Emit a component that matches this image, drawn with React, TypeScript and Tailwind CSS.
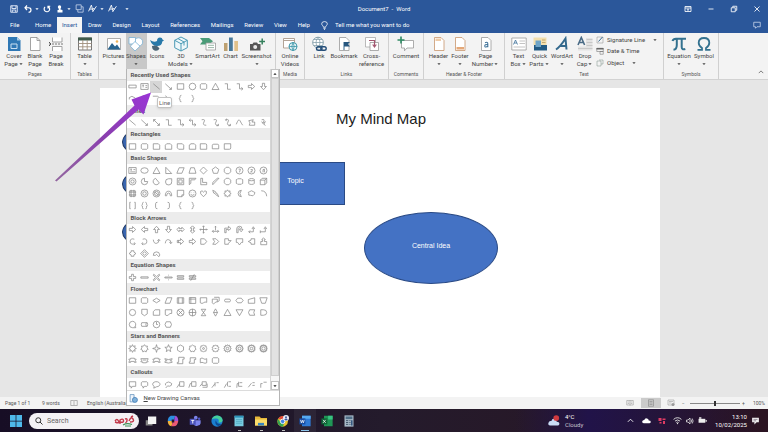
import type { ReactNode } from "react";

/* ---------- geometry helpers for the shape gallery (12 x 12 cells) ---------- */

const circle = (r: number, cx = 6, cy = 6) =>
  `M${cx - r} ${cy}a${r} ${r} 0 1 0 ${2 * r} 0a${r} ${r} 0 1 0 ${-2 * r} 0`;

const polygon = (n: number, r = 3.8, start = -90) => {
  const pts = Array.from({ length: n }, (_, i) => {
    const a = ((start + (i * 360) / n) * Math.PI) / 180;
    return `${(6 + r * Math.cos(a)).toFixed(2)} ${(6 + r * Math.sin(a)).toFixed(2)}`;
  });
  return `M${pts.join("L")}Z`;
};

const star = (n: number, outer = 4, inner = 2) => {
  const pts = Array.from({ length: n * 2 }, (_, i) => {
    const r = i % 2 ? inner : outer;
    const a = ((-90 + (i * 180) / n) * Math.PI) / 180;
    return `${(6 + r * Math.cos(a)).toFixed(2)} ${(6 + r * Math.sin(a)).toFixed(2)}`;
  });
  return `M${pts.join("L")}Z`;
};

const rect = "M2.5 3h7v6h-7Z";
const roundRect = "M3.5 3h5l1 1v4l-1 1h-5l-1-1V4Z";
const oval = "M2 6a4 3 0 1 0 8 0a4 3 0 1 0-8 0";
const triangle = "M6 2.5L9.8 9.3H2.2Z";
const right = "M2.5 4.8H6V2.8L9.5 6L6 9.2V7.2H2.5Z";
const left = "M9.5 4.8H6V2.8L2.5 6L6 9.2V7.2H9.5Z";
const up = "M4.8 9.5V6H2.8L6 2.5L9.2 6H7.2V9.5Z";
const down = "M4.8 2.5V6H2.8L6 9.5L9.2 6H7.2V2.5Z";
const braceL = "M7 2.5Q5.5 2.5 5.5 4T4.5 6Q5.5 6 5.5 8T7 9.5";
const braceR = "M5 2.5Q6.5 2.5 6.5 4T7.5 6Q6.5 6 6.5 8T5 9.5";
const line = "M2.5 3L9.5 9";
const lineArrow = "M2.5 3L9 9M9.2 6.8V9.2H6.8";
const lineDouble = "M3 3L9 9M9.2 6.8V9.2H6.8M2.8 5.2V2.8H5.2";
const elbow = "M3 3H6V9H9.5";
const elbowArrow = "M3 3H6V8.5H9.5M8 7L9.8 8.5L8 10";
const elbowDouble = "M2.5 3.5H6V8.5H9.5M8 7L9.8 8.5L8 10M4 2L2.4 3.5L4 5";
const curve = "M4 3Q8.5 2 6.5 5.5T9 9";
const cross = "M5 2.5H7V5H9.5V7H7V9.5H5V7H2.5V5H5Z";
const snip = "M2.5 3H8L9.5 4.5V9H2.5Z";
const arc = "M2.5 8.5Q2.5 3.5 6 3.5T9.5 8.5H8Q8 5.5 6 5.5T4 8.5Z";
const scroll = "M3.5 3H9.5V5H8V9H2.5V7.5H3.5Z";
const ribbon = "M2 4.5H4V3.5H8V4.5H10L9.2 6.2L10 8H8V7H4V8H2L2.8 6.2Z";
const chevron = "M3 3H6.5L9.5 6L6.5 9H3L5 6Z";
const callout = "M2.5 3H9.5V8H6L4.5 10V8H2.5Z";
const lineCallout = "M5 3H9.8V8H5ZM5 5L2 9.5";

type Section = { title: string; shapes: string[] };

const sections: Section[] = [
  {
    title: "Recently Used Shapes",
    shapes: [
      "M2 4.5H10V7.5H2Z", "M2 2.8H10V9.2H2ZM3.5 4.5H5.5M4.5 4.5V7M7 5H9M7 7H9", line, lineArrow, rect, circle(3.6),
      roundRect, triangle, elbow, elbowArrow, right, down,
      "M2.5 5Q5 2 9 5.5M2.5 5V7", curve, "M2 3.5H7L9 5", line, braceL, braceR,
    ],
  },
  {
    title: "Lines",
    shapes: [
      line, lineArrow, lineDouble, elbow, elbowArrow, elbowDouble, curve, `${curve}M7 9.5H9.2V7.5`,
      `${curve}M7 9.5H9.2V7.5M5.5 2L3.8 3L5 4.5`, "M2.5 8Q5 1 6.5 4T9.5 9", "M3 4L8 3L6.5 5.5H9.5V9H3.5Q5.5 6.5 3 4Z",
      "M4 3Q8 2 6 5T8 5Q5 8 8 9.5M4 5L6 8",
    ],
  },
  {
    title: "Rectangles",
    shapes: [
      rect, roundRect, snip, "M4 3H8L9.5 4.5V9H2.5V4.5Z", "M2.5 3H8L9.5 4.5V9H4L2.5 7.5Z", "M4 3H8L9.5 4.5V9H2.5V4.5Q3.5 4.5 4 3Z",
      "M2.5 3H8Q9.5 3 9.5 4.5V9H2.5Z", "M4 3.5H8Q9.5 3.5 9.5 5V8.5H2.5V5Q2.5 3.5 4 3.5Z", "M2.5 3H9.5V7.5Q9.5 9 8 9H2.5Z",
    ],
  },
  {
    title: "Basic Shapes",
    shapes: [
      "M2 2.8H10V9.2H2ZM3.5 4.5H5.5M4.5 4.5V6.5M7 5H9M3.5 7.5H9", oval, triangle, "M3 2.5V9.3H9.5Z", "M4.5 3H10L7.5 9H2Z",
      "M4 3H8L9.8 9H2.2Z", polygon(4), polygon(5), polygon(8, 3.8, 22.5), `${circle(3.8)}M5 4.5H7L6 8`,
      `${circle(3.8)}M5 5H7V6L5 7.5H7`, `${circle(3.8)}M5.5 5L7 4.5V8M5.5 5V8`,
      `${circle(3.8)}${circle(1.8)}`, "M6 2.5A3.5 3.5 0 1 0 9.5 6H6Z", "M5 2.6A3.5 3.5 0 1 0 9 7.5Z", "M6 3H9.5V6A3.4 3.4 0 1 1 6 3Z",
      "M2.5 2.5H9.5V9.5H2.5ZM4.2 4.2H7.8V7.8H4.2Z", "M2.5 9.5V2.5H9.8L8.5 4.2H4.2V8Z", "M3 2.5H5V7H9.5V9.5H3Z", "M3 9.5V7L8 2.5H9.8Z",
      polygon(8, 3.8, 22.5), "M4 3H8Q8.5 4 9.5 4V8Q8.5 8 8 9H4Q3.5 8 2.5 8V4Q3.5 4 4 3Z",
      "M3 4a3 1.2 0 1 0 6 0a3 1.2 0 1 0-6 0V8a3 1.2 0 0 0 6 0V4", "M2.5 4.5L4.5 2.5H9.5V7.5L7.5 9.5H2.5ZM2.5 4.5H7.5V9.5M7.5 4.5L9.5 2.5",
      "M3 3H9V9H3ZM2 4.5H10M2 7.5H10M4.5 2V10M7.5 2V10", `${circle(3.8)}${circle(1.9)}`, `${circle(3.8)}${circle(2.2)}M3.5 4L8.5 8`, arc,
      "M2.5 2.5H9.5V7.5L7.5 9.5H2.5ZM7.5 9.5V7.5H9.5", `${circle(3.8)}M4.5 5V5.5M7.5 5V5.5M4 7Q6 9 8 7`,
      "M6 9.5Q1.5 6 2.8 3.8Q4.5 2 6 4.5Q7.5 2 9.2 3.8Q10.5 6 6 9.5Z", "M3 2.5L6 4L6.5 5.5L8 6.2L9.5 9.5L6 7L5.5 6L4 5.5Z",
      star(8, 4, 2.6), "M8 2.5A3.5 3.5 0 1 0 8 9.5Q4.8 6 8 2.5Z", "M3 6Q1.5 4.5 4 4Q6 2 8 4Q11 4.5 9 7Q8 9.5 5 8Q2 8.5 3 6Z", "M3.5 3Q9 3 9.5 9",
      "M4 2.5H3V9.5H4M8 2.5H9V9.5H8", "M5 2.5Q3.8 2.5 3.8 4T3 6Q3.8 6 3.8 8T5 9.5M7 2.5Q8.2 2.5 8.2 4T9 6Q8.2 6 8.2 8T7 9.5",
      "M7 2.5Q5 2.5 5 4V8Q5 9.5 7 9.5", "M5 2.5Q7 2.5 7 4V8Q7 9.5 5 9.5", braceL, braceR,
    ],
  },
  {
    title: "Block Arrows",
    shapes: [
      right, left, up, down, "M2 6L4.5 3.5V5H7.5V3.5L10 6L7.5 8.5V7H4.5V8.5Z", "M6 2L8.5 4.5H7V7.5H8.5L6 10L3.5 7.5H5V4.5H3.5Z",
      "M6 2V10M2 6H10M5 3L6 2L7 3M5 9L6 10L7 9M3 5L2 6L3 7M9 5L10 6L9 7", "M6 2.5V7M2.5 8H9.5M4 6.5L2.5 8L4 9.5M8 6.5L9.5 8L8 9.5M5 3.5L6 2.5L7 3.5",
      "M3 9.5V4.5H7V2.5L9.8 5L7 7V6H4.5V9.5Z", "M3 9.5V5Q3 2.5 6 2.5T8.5 5V6H9.8L7.8 8.5L5.8 6H7Q7 4 6 4T4.5 5V9.5Z",
      "M3 8.5H8V4.5M6.5 5.5L8 3L9.5 5.5M4.5 7L3 8.5L4.5 10", "M2.5 8.5H8V4.5M6.5 5.5L8 3L9.5 5.5M2.5 7V10",
      "M8 3.5Q3.5 2 3.5 6T8.5 8.5M8 7L9 8.5L7.5 9.8", "M4 3.5Q8.5 2 8.5 6T3.5 8.5M4 7L3 8.5L4.5 9.8", "M2.5 4Q3 8.5 6 8T8.5 4.5M7 5.5L8.5 3.5L10 5.5",
      "M2.5 8Q3 3.5 6 4T8.5 7.5M7 6.5L8.5 8.5L10 6.5", `${right}M3.8 4.8V7.2`, right, "M3 3H7L9.5 6L7 9H3Z", chevron,
      "M3 3H7V5H10L7 8V9H3Z", "M2.5 3H9.5V7H8L6 9.8L4 7H2.5Z", "M9.5 3H5.5V4.5L2.5 6L5.5 7.5V9H9.5Z", "M3 9.5V6H5V4H4L6 2L8 4H7V6H9.5V9.5Z",
      "M4.5 3H7.5V4.5L9.8 6L7.5 7.5V9H4.5V7.5L2.2 6L4.5 4.5Z", `${polygon(4, 4.2)}${polygon(4, 2)}`, "M2.5 8A3.5 3.5 0 0 1 9.5 7.5M5 8Q6 6 7 8L8.5 9.5L9.8 7.5M2.5 8H5",
    ],
  },
  {
    title: "Equation Shapes",
    shapes: [
      cross, "M2 5.3H10V6.7H2Z", "M3 2.5L6 5L9 2.5L9.5 3.5L7.2 6L9.5 8.5L9 9.5L6 7L3 9.5L2.5 8.5L4.8 6L2.5 3.5Z",
      "M2 5.5H10V6.5H2ZM6 3V3.8M6 8.2V9", "M2.5 4H9.5V5.4H2.5ZM2.5 6.6H9.5V8H2.5Z", "M2.5 4H9.5V5.4H2.5ZM2.5 6.6H9.5V8H2.5ZM8 2.5L4 9.5",
    ],
  },
  {
    title: "Flowchart",
    shapes: [
      rect, roundRect, "M6 3.5L10 6L6 8.5L2 6Z", "M4.5 3H9.8L7.5 9H2.2Z", "M2.5 3H9.5V9H2.5ZM4 3V9M8 3V9", "M2.5 2.8H9.5V9.2H2.5ZM2.5 4.5H9.5M4.2 2.8V9.2",
      "M2.5 3H9.5V8Q7.5 7 6 8.5T2.5 8.5Z", "M4.5 2.5H10V6.5L8 7.5Q6 7 5 9T2.5 8.5V4.5H8V7.5", "M3.5 4.5H8.5Q10 6 8.5 7.5H3.5Q2 6 3.5 4.5Z",
      "M2 6L4 3.5H8L10 6L8 8.5H4Z", "M2.5 5L9.5 3V9H2.5Z", "M2 3H10L8 9H4Z",
      circle(3.4), "M3 2.5H9V7.5L6 9.5L3 7.5Z", "M4.5 3H9.5V9H2.5V5Z", "M2.5 3H9.5V7Q7.5 6.5 6 8.5T2.5 8.5Z", `${circle(3.8)}M3.5 3.5L8.5 8.5M8.5 3.5L3.5 8.5`,
      `${circle(3.8)}M6 2.2V9.8M2.2 6H9.8`, "M3.5 2.5H8.5L3.5 9.5H8.5Z", "M6 2L8.2 6L6 10L3.8 6ZM3.8 6H8.2", triangle, "M2.2 3H9.8L6 9.5Z",
      "M4 3H9.5Q7.5 6 9.5 9H4Q1.5 6 4 3Z", "M3 3H6Q9.5 3 9.5 6T6 9H3Z",
      "M6 2.5A3.5 3.5 0 1 0 6 9.5H9.5V8.5H8.5A3.5 3.5 0 0 0 6 2.5", "M3 4H9Q10 6 9 8H3Q2 6 3 4ZM8 4Q7 6 8 8", `${circle(3.6)}M6 3V6H7.5`, "M3.5 3H8Q10.5 6 8 9H3.5L2.2 6Z",
    ],
  },
  {
    title: "Stars and Banners",
    shapes: [
      star(8, 4.2, 2.4), star(7, 4.2, 2.8), star(4, 4.2, 1.3), star(5, 4.2, 1.8), polygon(6), star(7, 4, 3), `${star(8, 4, 3)}${circle(1)}`,
      `${star(10, 4, 3)}M5 6H7`, `${star(12, 4.2, 3)}${circle(1.4)}`, `${star(16, 4.2, 3)}${circle(1.6)}`, `${star(18, 4.2, 3)}${circle(1.4)}`, `${star(20, 4.2, 3)}${circle(1.8)}`,
      ribbon, "M2 4H10L9.2 6L10 7.5H8V8.5H4V7.5H2L2.8 6ZM4 5.5H8", ribbon, "M2 4Q6 6 10 4L9.2 6L10 8Q6 9.5 2 8L2.8 6ZM4 5V7M8 5V7",
      "M4 2.5H10V4.5H8.5V9.5H2.5V8H4Z", scroll, "M2.5 4Q4.5 2.5 6 4T9.5 4V8.5Q7.5 9.5 6 8.5T2.5 8.5Z", roundRect,
    ],
  },
  {
    title: "Callouts",
    shapes: [
      callout, "M3.5 3H8.5L9.5 4V7L8.5 8H6L4.5 10V8H3.5L2.5 7V4Z", "M3.5 8A4 2.8 0 1 1 6 8.5L3 10Z", "M3 7Q1.5 5 4 4Q6 2.5 8 4Q10.5 4.5 9 7Q7 8.5 5 7.5L3 9.8",
      lineCallout, "M5 3H9.8V8H5ZM5 5H3.5L2 9.5", "M4.5 3H9V7H4.5ZM5 9H10V5M4.5 5L2 8", "M5.5 3.5V8M5.5 5L2 9.5M7 4H9.5", "M6 3V8M7 3H9.8M5 5L2.5 9.5M7 8H9.8",
      "M5 3V8H9M5 5H3.5L3 9.5M6 4H9", "M2.5 9L6 4.5M7 4H9.5M7 7H9.5", "M3 9.5V5H5M6 3.5H9.5",
    ],
  },
];

/* ---------- small building blocks ---------- */

const Svg = ({ children, className = "size-4", box = 16 }: { children: ReactNode; className?: string; box?: number }) => (
  <svg viewBox={`0 0 ${box} ${box}`} className={`shrink-0 ${className}`} fill="none" aria-hidden="true">
    {children}
  </svg>
);

const Caret = ({ className = "" }: { className?: string }) => (
  <svg viewBox="0 0 6 4" className={`inline-block h-1 w-1.5 shrink-0 ${className}`} aria-hidden="true">
    <path d="M1.4 1.2h3.2L3 2.9Z" fill="currentColor" />
  </svg>
);

function Tool({ icon, top, bottom, caret, width }: { icon: ReactNode; top: string; bottom?: string; caret?: boolean; width: string }) {
  return (
    <button type="button" className={`flex h-9 flex-col items-center whitespace-nowrap pt-[3px] text-[6px] leading-[8px] text-[#444] ${width}`}>
      {icon}
      <span>{top}</span>
      <span className="flex h-2 items-center">
        {bottom}
        {caret && <Caret />}
      </span>
    </button>
  );
}

function Group({ name, label, width, children }: { name: string; label?: string; width: string; children: ReactNode }) {
  return (
    <section aria-label={name} className={`flex shrink-0 flex-col border-r border-[#d0d0d0] ${width}`}>
      <div className="flex justify-center">{children}</div>
      {label && <span className="mt-px text-center text-[5px] leading-[8px] text-[#555]">{label}</span>}
    </section>
  );
}

/* ---------- ribbon icons ---------- */

const sheet = "M3.5 1.5H10L13 4.5V14.5H3.5Z";

const icons = {
  cover: <Svg><path d="M2 1H11L14.5 4.5V15H2Z" fill="#2f78b5" /><path d="M11 1V4.5H14.5" fill="#a9cbe6" /><path d="M5 8H11V12.5H5Z" stroke="#c9e0f2" /></Svg>,
  blank: <Svg><path d={sheet} fill="#fff" stroke="#8d8d8d" strokeWidth=".8" /><path d="M10 1.5V4.5H13" stroke="#8d8d8d" strokeWidth=".8" /></Svg>,
  pageBreak: <Svg><path d="M4.5 1.5V6H14V1.5M4.5 15V10.5H14V15" fill="#fff" stroke="#999" strokeWidth=".9" /><path d="M1 8H15" stroke="#777" strokeDasharray="2 1" /><path d="M1 6L3 8L1 10" stroke="#555" /></Svg>,
  table: <Svg><path d="M1.5 2H14.5V14H1.5Z" fill="#fff" stroke="#777" /><path d="M1 1.5H15V4.5H1Z" fill="#3f5a4a" /><path d="M1.5 7.5H14.5M1.5 10.8H14.5M5.8 4V14M10.2 4V14" stroke="#a08f7c" strokeWidth=".9" /></Svg>,
  pictures: <Svg><path d="M1.5 2.5H14.5V13.5H1.5Z" fill="#fff" stroke="#999" strokeWidth=".8" /><path d="M1.5 13.5L6 7L9 10.5L11 8.5L14.5 13.5Z" fill="#29648f" /><circle cx="11" cy="5.5" r="1.3" fill="#f0b35b" /></Svg>,
  shapes: <Svg className="h-4 w-[18px]"><circle cx="10.5" cy="6" r="4.2" fill="#fff" stroke="#7ab1d4" strokeWidth=".8" /><path d="M1 1.5H7.5V8H1Z" fill="#fff" stroke="#7ab1d4" strokeWidth=".8" /><path d="M7 5.5L12 10.2L7 15L2.3 10.2Z" fill="#fff" stroke="#7ab1d4" strokeWidth=".8" /></Svg>,
  icons: <Svg><path d="M1 4Q5 7 8 5Q8 1.5 11 1.5Q13.3 1.5 13.5 3.5L15 4.5L13.3 5.5Q13 10 8 10Q3 10 1 4Z" fill="#2879a9" /><path d="M3 10Q8 8 10.5 12.5Q9 15.5 5.5 14.5Q3 13.5 3 10Z" fill="#4a6475" /></Svg>,
  models: <Svg><path d="M8 1L14.3 4.3V11.7L8 15L1.7 11.7V4.3Z" fill="#eef7fa" stroke="#4b9ab5" /><path d="M1.7 4.3L8 7.7L14.3 4.3M8 7.7V15M5 2.6L11 6V9.5" stroke="#4b9ab5" /></Svg>,
  smart: <Svg className="h-4 w-[18px]"><path d="M0 2H9L13 5.2L9 8.5H0L2.5 5.2Z" fill="#4b9c78" /><path d="M6 7H15.5V14H6Z" fill="#fff" stroke="#999" strokeWidth=".8" /><path d="M8 9.3H14M8 11.6H14" stroke="#9bb8a8" /></Svg>,
  chart: <Svg><path d="M1 7H4.5V15H1Z" fill="#bda070" /><path d="M6 1.5H9.8V15H6Z" fill="#49789a" /><path d="M11.3 5H15V15H11.3Z" fill="#e2c18a" /></Svg>,
  screenshot: <Svg className="h-4 w-[18px]"><path d="M1 8H3.5L4.5 6.5H8L9 8H11.5V14.5H1Z" fill="#555" /><circle cx="6.2" cy="11" r="2" fill="#e8e8e8" /><path d="M13.2 2.5V8.5M10.2 5.5H16" stroke="#35805c" strokeWidth="1.5" /></Svg>,
  video: <Svg><path d="M1.5 2.5H12.5V12H1.5Z" fill="#fff" stroke="#b3a396" /><path d="M1.5 4.5H12.5" stroke="#b3a396" /><circle cx="11" cy="10.5" r="4" fill="#e7f4f6" stroke="#3c96a8" /><path d="M7 10.5H15M11 6.5Q8.5 10.5 11 14.5Q13.5 10.5 11 6.5" stroke="#3c96a8" strokeWidth=".8" /></Svg>,
  link: <Svg><circle cx="7" cy="6.5" r="5.3" fill="#fff" stroke="#7896a4" strokeWidth=".9" /><path d="M1.7 6.5H12.3M7 1.2Q3 6.5 7 11.8Q11 6.5 7 1.2M2.8 3.5H11.2M2.8 9.5H11.2" stroke="#7896a4" strokeWidth=".7" /><rect x="5.5" y="10.7" width="5.5" height="3.6" rx="1.8" stroke="#224d78" strokeWidth="1.4" /><rect x="9.8" y="10.7" width="5.4" height="3.6" rx="1.8" stroke="#224d78" strokeWidth="1.4" /></Svg>,
  bookmark: <Svg><path d={sheet} fill="#fff" stroke="#999" strokeWidth=".8" /><path d="M8 6V14" stroke="#33658a" /><path d="M8 6H14L12 8L14 10.5H8Z" fill="#27577f" /></Svg>,
  cross: <Svg><path d="M1.5 1.5H11.5V11H1.5Z" fill="#fff" stroke="#aaa" strokeWidth=".8" /><path d="M6 6.5H14.5V14.5H6Z" fill="#fff" stroke="#999" strokeWidth=".8" /><path d="M5 4.5H10.5V10M8.7 8.5L10.5 11L12.3 8.5" stroke="#a35870" strokeWidth="1.2" /></Svg>,
  comment: <Svg className="h-4 w-[18px]"><path d="M3.5 4.5H15.5V12H9L6.5 14.8V12H3.5Z" fill="#fff" stroke="#999" strokeWidth=".8" /><path d="M3 .5V7.5M-.5 4H6.5" stroke="#2f8a63" strokeWidth="1.6" /></Svg>,
  header: <Svg><path d={sheet} fill="#fff" stroke="#c8966c" strokeWidth=".8" /><path d="M4.5 2.5H10V5H4.5Z" fill="#eecba8" /></Svg>,
  footer: <Svg><path d={sheet} fill="#fff" stroke="#c8966c" strokeWidth=".8" /><path d="M4.5 11H12V13.5H4.5Z" fill="#e5a878" /></Svg>,
  number: <Svg><path d={sheet} fill="#fff" stroke="#999" strokeWidth=".8" /><path d="M7 6.7Q10 5.5 9.8 8V11.2M9.8 8.5Q6.5 8.3 6.8 10.2Q7.5 12 9.8 10" stroke="#41749b" strokeWidth="1.1" /></Svg>,
  textBox: <Svg><path d="M.8 2H15.2V14H.8Z" fill="#fff" stroke="#999" strokeWidth=".8" /><path d="M2.5 8.5L4.5 4L6.5 8.5M3.2 7H5.8" stroke="#4e7da3" strokeWidth=".9" /><path d="M8.5 5H14M8.5 7.5H14M2.5 11H14" stroke="#b5b5b5" strokeWidth=".8" /></Svg>,
  quick: <Svg><path d="M1.5 1.5H14.5V9H1.5Z" fill="#f3dfae" /><path d="M2 9H15V14.5H2Z" fill="#225a83" /><path d="M3.5 4.5H9V11H3.5Z" fill="#6fa5c8" /><path d="M10 4H13.5M10 6.5H13.5" stroke="#b69b61" strokeWidth=".8" /></Svg>,
  wordArt: <Svg><path d="M2 13.5Q6 11 11.5 2.5L12.5 13.5M5.5 10H13" stroke="#34698d" strokeWidth="2" /></Svg>,
  dropCap: <Svg><path d="M9 2H15.5V14.5H1V10.5H9Z" fill="#e3e3e3" /><path d="M1 9L4.3 1.5L7.6 9M2.2 6.5H6.5" stroke="#4a6b86" strokeWidth="1.6" /><path d="M9.5 3.5H15.5M9.5 6.5H15.5M9.5 9.5H15.5M1 12.5H15.5" stroke="#c2c2c2" strokeWidth=".8" /></Svg>,
  pi: <Svg><path d="M1.5 5Q2.2 2.7 5 2.7H15M5.8 3V9Q5.8 13.5 2.5 13.8M10.7 3V11Q10.7 14.2 14.3 13" stroke="#33718f" strokeWidth="2" /></Svg>,
  omega: <Svg><path d="M1.5 13.8H6V12Q2.7 10 2.7 6.8Q2.7 2 8 2T13.3 6.8Q13.3 10 10 12V13.8H14.5" stroke="#33718f" strokeWidth="1.8" /></Svg>,
};

/* ---------- title bar and tabs ---------- */

const tabs = ["Home", "Insert", "Draw", "Design", "Layout", "References", "Mailings", "Review", "View", "Help"];

const QuickButton = ({ label, children, className }: { label: string; children: ReactNode; className: string }) => (
  <button type="button" aria-label={label} className={`flex items-center ${className}`}>
    {children}
  </button>
);

const Editor = () => (
  <Svg className="size-[9px]">
    <path d="M1 13L6 2L9 13M3 9H8M8 14L15 4M9 8L12 9" stroke="#fff" strokeWidth="1.6" />
  </Svg>
);

function TitleBar() {
  return (
    <header className="shrink-0 bg-[#2b579a] text-[6px] leading-[8px] text-white">
      <div className="grid h-[17px] grid-cols-[1fr_auto_1fr] items-center">
        <div className="flex items-center pl-[10px]">
          <QuickButton label="Save" className="w-[14px]">
            <Svg className="size-2"><path d="M1.5 1.5H14.5V14.5H1.5ZM4 1.5V7H12V1.5M4.5 14V10H11.5V14" stroke="#e8eefa" strokeWidth="1.8" /></Svg>
          </QuickButton>
          <QuickButton label="Undo" className="w-[19px]">
            <Svg className="size-2"><path d="M6 1L2 5.5L6 10M2.5 5.5H9Q14 5.5 14 10T9 14.5" stroke="#fff" strokeWidth="2.4" /></Svg>
            <Caret className="ml-0.5" />
          </QuickButton>
          <QuickButton label="Redo" className="w-[13px]">
            <Svg className="size-2"><path d="M10 3A5.5 5.5 0 1 1 4 4M10 7V2.5H14.5" stroke="#fff" strokeWidth="2.4" /></Svg>
          </QuickButton>
          <QuickButton label="Touch mode" className="w-[19px]">
            <Svg className="size-2"><circle cx="7" cy="4" r="3.4" fill="#fff" /><path d="M5.5 4H9V9L13 10V15H3V10H5.5Z" fill="#fff" /></Svg>
            <Caret className="ml-0.5" />
          </QuickButton>
          <QuickButton label="Copy" className="w-[13px]">
            <Svg className="size-[9px]"><path d="M2 1.5H11V10H2ZM5 10V14.5H14.5V5H11" stroke="#c9d6ec" strokeWidth="1.4" /></Svg>
          </QuickButton>
          <QuickButton label="Editor" className="w-[20px]"><Editor /><Caret className="ml-0.5" /></QuickButton>
          <QuickButton label="Ink editor" className="w-[16px]"><Editor /></QuickButton>
          <QuickButton label="Customize toolbar" className=""><Caret /></QuickButton>
        </div>
        <h1>Document7&nbsp; -&nbsp; Word</h1>
        <div className="flex items-center justify-end">
          {[
            ["Ribbon options", "M2 3H14V13H2ZM2 6H14M8 12V8M6 9.5L8 7.5L10 9.5"],
            ["Minimize", "M3 8H13"],
            ["Restore", "M2.5 5.5H10.5V13.5H2.5ZM5.5 5V2.5H13.5V10.5H11"],
            ["Close", "M3 3L13 13M13 3L3 13"],
          ].map(([label, d]) => (
            <button key={label} type="button" aria-label={label} className="flex w-[23px] justify-center">
              <Svg className="size-2"><path d={d} stroke="#fff" strokeWidth="1.7" /></Svg>
            </button>
          ))}
        </div>
      </div>
      <nav className="flex h-4 items-stretch" aria-label="Ribbon tabs">
        <button type="button" className="w-[30px] pl-[10px] text-left">File</button>
        <div className="flex w-[285px] justify-between">
          {tabs.map((t) => (
            <button key={t} type="button" className={t === "Insert" ? "bg-[#f5f5f5] px-[5px] text-[#2b579a]" : "px-[5px]"}>
              {t}
            </button>
          ))}
        </div>
        <label className="flex flex-1 items-center gap-1.5 pl-[5px]">
          <Svg className="size-[9px]"><path d="M6 11Q6 9.5 4.5 8T3 5Q3 1 8 1T13 5Q13 6.5 11.5 8T10 11ZM6 13H10M7 15H9" stroke="#fff" strokeWidth="1.4" /></Svg>
          <input aria-label="Tell me" placeholder="Tell me what you want to do" className="w-28 bg-transparent outline-none placeholder:text-white" />
        </label>
        <button type="button" aria-label="Comments" className="flex w-[23px] items-center justify-center">
          <Svg className="size-2"><path d="M1.5 2.5H14.5V11.5H8L5 14.5V11.5H1.5Z" stroke="#c9d6ec" strokeWidth="1.6" /></Svg>
        </button>
      </nav>
    </header>
  );
}

/* ---------- shape gallery ---------- */

function ShapeGallery() {
  return (
    <div role="menu" className="absolute left-0 top-full z-10 w-[154px] border border-t-0 border-[#b5b5b5] bg-white">
      <div className="flex">
        <div className="grid h-[321px] w-36 auto-rows-fr grid-cols-12">
          {sections.map((s, si) => [
            <h2 key={s.title} className="col-span-12 flex items-center bg-[#ececec] pl-1 text-[6px] font-bold leading-[8px] text-[#555]">
              {s.title}
            </h2>,
            ...s.shapes.map((d, i) => (
              <button
                key={`${s.title}${i}`}
                type="button"
                aria-label={`${s.title} ${i + 1}`}
                className={si === 0 && i === 2 ? "flex items-center justify-center bg-[#d6d6d6]" : "flex items-center justify-center"}
              >
                <Svg box={12} className="size-[11px]">
                  <path d={d} stroke="#868686" strokeWidth=".8" />
                </Svg>
              </button>
            )),
          ])}
        </div>
        <div className="flex flex-1 flex-col border-l border-[#d5d5d5] bg-[#f6f6f6]">
          <button type="button" aria-label="Scroll up" className="flex h-[9px] items-center justify-center border border-[#c4c4c4] bg-white text-[#222]">
            <Caret className="rotate-180" />
          </button>
          <div className="h-[298px] border border-[#cfcfcf] bg-[#e2e2e2]" />
          <button type="button" aria-label="Scroll down" className="mt-auto flex h-[9px] items-center justify-center border border-[#c4c4c4] bg-white text-[#222]">
            <Caret />
          </button>
        </div>
      </div>
      <button type="button" className="flex h-[15px] w-full items-center gap-1.5 border-t border-[#dcdcdc] pl-0.5 text-[6px] leading-[8px] text-[#444]">
        <Svg className="size-[9px]"><path d="M2 1H9V14H2Z" fill="#eef4fa" stroke="#5f8fbb" strokeWidth="1.3" /><circle cx="10.5" cy="10.5" r="4.5" fill="#7fb0d8" stroke="#3c78b4" strokeWidth="1.3" /></Svg>
        <span><u>N</u>ew Drawing Canvas</span>
      </button>
    </div>
  );
}

/* ---------- ribbon ---------- */

function Ribbon() {
  return (
    <div className="relative z-10 flex h-[47px] shrink-0 border-b border-[#d2d2d2] bg-[#f3f3f3]">
      <Group name="Pages" label="Pages" width="w-[71px]">
        <Tool width="w-[21px]" icon={icons.cover} top="Cover" bottom="Page" caret />
        <Tool width="w-[21px]" icon={icons.blank} top="Blank" bottom="Page" />
        <Tool width="w-[21px]" icon={icons.pageBreak} top="Page" bottom="Break" />
      </Group>
      <Group name="Tables" label="Tables" width="w-[28px]">
        <Tool width="w-[24px]" icon={icons.table} top="Table" caret />
      </Group>
      <Group name="Illustrations" width="w-[177px]">
        <Tool width="w-[24px]" icon={icons.pictures} top="Pictures" caret />
        <div className="relative bg-[#c8c8c8]">
          <Tool width="w-[21px]" icon={icons.shapes} top="Shapes" caret />
          <ShapeGallery />
        </div>
        <Tool width="w-[21px]" icon={icons.icons} top="Icons" />
        <Tool width="w-[27px]" icon={icons.models} top="3D" bottom="Models" caret />
        <Tool width="w-[26px]" icon={icons.smart} top="SmartArt" />
        <Tool width="w-[20px]" icon={icons.chart} top="Chart" />
        <Tool width="w-[32px]" icon={icons.screenshot} top="Screenshot" caret />
      </Group>
      <Group name="Media" label="Media" width="w-[29px]">
        <Tool width="w-[24px]" icon={icons.video} top="Online" bottom="Videos" />
      </Group>
      <Group name="Links" label="Links" width="w-[84px]">
        <Tool width="w-[22px]" icon={icons.link} top="Link" />
        <Tool width="w-[28px]" icon={icons.bookmark} top="Bookmark" />
        <Tool width="w-[27px]" icon={icons.cross} top="Cross-" bottom="reference" />
      </Group>
      <Group name="Comments" label="Comments" width="w-[35px]">
        <Tool width="w-[30px]" icon={icons.comment} top="Comment" />
      </Group>
      <Group name="Header and footer" label="Header & Footer" width="w-[81px]">
        <Tool width="w-[22px]" icon={icons.header} top="Header" caret />
        <Tool width="w-[21px]" icon={icons.footer} top="Footer" caret />
        <Tool width="w-[30px]" icon={icons.number} top="Page" bottom="Number" caret />
      </Group>
      <Group name="Text" label="Text" width="w-[159px]">
        <Tool width="w-[21px]" icon={icons.textBox} top="Text" bottom="Box" caret />
        <Tool width="w-[21px]" icon={icons.quick} top="Quick" bottom="Parts" caret />
        <Tool width="w-[24px]" icon={icons.wordArt} top="WordArt" caret />
        <Tool width="w-[22px]" icon={icons.dropCap} top="Drop" bottom="Cap" caret />
        <div className="flex w-[64px] flex-col pt-px text-[6px] leading-[8px] text-[#444]">
          <button type="button" className="flex h-[11px] items-center gap-[3px]">
            <Svg className="size-2"><path d="M2 2H14V14H2Z" stroke="#888" /><path d="M5 11L13 2" stroke="#35688f" strokeWidth="2" /></Svg>
            Signature Line <Caret className="ml-1" />
          </button>
          <button type="button" className="flex h-3 items-center gap-[3px]">
            <Svg className="size-2"><path d="M1.5 2.5H14.5V9H1.5ZM8 9H14.5V14.5H8Z" stroke="#666" /><path d="M1 2H15V5H1Z" fill="#666" /></Svg>
            Date &amp; Time
          </button>
          <button type="button" className="flex h-[11px] items-center gap-[3px]">
            <Svg className="size-2"><path d="M2 4H10V14H2ZM6 2H14V10H10" stroke="#7a8c84" /></Svg>
            Object <Caret className="ml-1" />
          </button>
        </div>
      </Group>
      <Group name="Symbols" label="Symbols" width="w-[55px]">
        <Tool width="w-[26px]" icon={icons.pi} top="Equation" caret />
        <Tool width="w-[24px]" icon={icons.omega} top="Symbol" caret />
      </Group>
      <div className="flex flex-1 items-end justify-end p-1">
        <button type="button" aria-label="Collapse ribbon">
          <Svg className="size-[6px]"><path d="M2 11L8 5L14 11" stroke="#555" strokeWidth="2" /></Svg>
        </button>
      </div>
    </div>
  );
}

/* ---------- document ---------- */

function DocumentArea() {
  return (
    <main className="flex min-h-0 flex-1 justify-center bg-[#e6e6e6] pr-2 pt-2">
      <article className="relative w-[560px] bg-white font-['Liberation_Sans',Arial,sans-serif]">
        <h2 className="absolute left-[236px] top-[22px] text-[15px] leading-[18px] text-[#1c1c1c]">My Mind Map</h2>
        <div className="absolute left-[22px] top-[36px] h-9 w-20 rounded-[50%] border border-[#1f3864] bg-[#3a66b0]" />
        <div className="absolute left-[22px] top-[78px] h-9 w-20 rounded-[50%] border border-[#1f3864] bg-[#3a66b0]" />
        <div className="absolute left-[22px] top-[126px] h-9 w-20 rounded-[50%] border border-[#1f3864] bg-[#3a66b0]" />
        <div className="absolute left-[146px] top-[74px] flex h-[43px] w-[99px] items-center justify-center border border-[#2a4a85] bg-[#4472c4] pb-1 text-[7px] text-white">
          Topic
        </div>
        <div className="absolute left-[264px] top-[124px] flex h-[72px] w-[134px] items-center justify-center rounded-[50%] border border-[#2a4a85] bg-[#4472c4] pb-1 text-[7px] text-white">
          Central Idea
        </div>
      </article>
    </main>
  );
}

function StatusBar() {
  return (
    <footer className="flex h-3 shrink-0 items-center bg-[#f3f3f3] pl-[5px] pr-[3px] text-[5px] leading-[8px] text-[#555]">
      <span className="w-[37px]">Page 1 of 1</span>
      <span className="w-[28px]">9 words</span>
      <Svg className="size-2"><path d="M1.5 3H7L8 4L9 3H14.5V13H9L8 14L7 13H1.5ZM8 4V13" stroke="#777" /></Svg>
      <span className="ml-[9px]">English (Australia)</span>
      <div className="ml-auto flex items-center">
        <button type="button" aria-label="Read mode" className="flex w-[21px] justify-center">
          <Svg className="size-2"><path d="M1.5 3H14.5V12H1.5ZM8 3V13M3.5 6H6.5M9.5 6H12.5M3.5 9H6.5M9.5 9H12.5" stroke="#888" /></Svg>
        </button>
        <button type="button" aria-label="Print layout" className="flex h-[10px] w-[20px] items-center justify-center bg-[#cbcbcb]">
          <Svg className="size-2"><path d="M3 1.5H13V14.5H3ZM5 5H11M5 8H11M5 11H11" stroke="#777" /></Svg>
        </button>
        <button type="button" aria-label="Web layout" className="flex w-[21px] justify-center">
          <Svg className="size-2"><path d="M2 2H14V12H2ZM4 5H12M4 8H9" stroke="#888" /><circle cx="12" cy="11" r="3" fill="#999" /></Svg>
        </button>
        <span className="w-2">−</span>
        <input
          type="range"
          aria-label="Zoom"
          defaultValue={50}
          className="h-[6px] w-[50px] appearance-none bg-transparent [&::-webkit-slider-runnable-track]:h-px [&::-webkit-slider-runnable-track]:bg-[#888] [&::-webkit-slider-thumb]:-mt-0.5 [&::-webkit-slider-thumb]:h-[5px] [&::-webkit-slider-thumb]:w-0.5 [&::-webkit-slider-thumb]:appearance-none [&::-webkit-slider-thumb]:bg-[#333]"
        />
        <span className="ml-0.5 w-[11px]">+</span>
        <span>100%</span>
      </div>
    </footer>
  );
}

/* ---------- taskbar ---------- */

const apps: { name: string; running?: boolean; active?: boolean; art: ReactNode }[] = [
  { name: "Task view", art: <><path d="M1 7H10V14H1Z" fill="#888" /><path d="M4 2H15V12H4Z" fill="#f3f3f3" /></> },
  { name: "Copilot", art: <><path d="M5 1H11L9 8H1Q1 3 5 1Z" fill="#2c8fe0" /><path d="M11 1Q15 2 15 8H9Z" fill="#a24fd6" /><path d="M1 8H8L6 15Q1 14 1 8Z" fill="#f2b23a" /><path d="M8 8H15Q14 15 9 15H6Z" fill="#ea5a75" /><path d="M6.3 6H9.7V10H6.3Z" fill="#24182e" /></> },
  { name: "Teams", art: <><circle cx="9" cy="3.5" r="2.5" fill="#7b83eb" /><circle cx="13.5" cy="5" r="1.6" fill="#5059c9" /><path d="M6 7H15.5V11Q15 14 12 14Q8 16 6 12Z" fill="#7b83eb" /><path d="M1 5H9V13H1Z" fill="#4b53bc" /><path d="M3 7.2H7M5 7.2V11.3" stroke="#fff" strokeWidth="1.2" /></> },
  { name: "Edge", art: <><circle cx="8" cy="8" r="7.5" fill="#1b7fd0" /><path d="M1 6Q3 .5 8.5 .5Q15.5 1.5 15.5 7.5Q14.5 10.5 10 10Q11.5 5 7 4.8Q3 4.5 1 6Z" fill="#46cf9a" /><path d="M6.5 7Q4 12 9.5 14.8Q12 14.5 13.8 12Q8 13 6.5 7Z" fill="#0c4a91" /></> },
  { name: "Notepad", running: true, art: <><path d="M2 1H14V15H2Z" fill="#77cbe0" /><path d="M2 1H14V3.5H2Z" fill="#2b91b7" /><path d="M4 6H12M4 8.5H12M4 11H12" stroke="#4fa5bf" /></> },
  { name: "File Explorer", running: true, art: <><path d="M0 2H6L8 4H16V14H0Z" fill="#e9b93a" /><path d="M0 6H16V14H0Z" fill="#fbdc6b" /><path d="M4 10.5H12V14H4Z" fill="#3a85bf" /></> },
  { name: "Chrome", running: true, art: <><circle cx="7.5" cy="8.5" r="7" fill="#e8c32e" /><path d="M1.3 5.3Q4 1 8 1.5Q13 2 14 6H7.5Z" fill="#e24a3b" /><path d="M1.3 5.3Q-1 11 4 14.5L8 15.5L9.5 10H5Z" fill="#32a350" /><circle cx="7.5" cy="8.5" r="3" fill="#3f82e8" stroke="#fff" strokeWidth="1.1" /><circle cx="12" cy="4" r="4" fill="#e6e9f5" /><circle cx="12" cy="3" r="1.3" fill="#38569c" /><path d="M9.7 6Q12 3.6 14.3 6Q12 8.4 9.7 6Z" fill="#38569c" /></> },
  { name: "Word", running: true, active: true, art: <><path d="M4 1H15.5V15H4Z" fill="#2f7ad6" /><path d="M4 1H15.5V5H4Z" fill="#56aaf0" /><path d="M.5 4.5H8.5V12.5H.5Z" fill="#174ca3" /><path d="M2 6.5L3.2 10.5L4.5 7L5.8 10.5L7 6.5" stroke="#fff" /></> },
  { name: "Excel", art: <><path d="M4 1H15.5V15H4Z" fill="#1f9655" /><path d="M9.5 1H15.5V6H9.5Z" fill="#38c481" /><path d="M.5 4.5H8.5V12.5H.5Z" fill="#0e6437" /><path d="M2.7 6.5L6.3 10.5M6.3 6.5L2.7 10.5" stroke="#fff" /></> },
  { name: "Calculator", art: <><path d="M2 .5H14V15.5H2Z" fill="#a8bac8" /><path d="M3.5 2H12.5V5.5H3.5Z" fill="#4f6e87" /><path d="M4 7.5H7M4 10H7M4 12.5H7M8.5 7.5H10M8.5 10H10M8.5 12.5H10" stroke="#42566a" strokeWidth="1.3" /><path d="M10.8 7H12.7V14H10.8Z" fill="#2a4e77" /></> },
];

function Taskbar() {
  return (
    <div className="flex h-[23px] shrink-0 items-center bg-linear-to-r from-[#170e25] via-[#241b2c] via-50% to-[#2b1422] pl-[10px] pr-2 text-[6px] leading-[8px] text-white">
      <button type="button" aria-label="Start" className="mr-[7px]">
        <Svg className="size-3"><path d="M0 0H7.5V7.5H0ZM8.5 0H16V7.5H8.5ZM0 8.5H7.5V16H0ZM8.5 8.5H16V16H8.5Z" fill="#4fb9ea" /></Svg>
      </button>
      <label className="flex h-4 w-[110px] items-center rounded-full bg-[#f4f1f5] pl-1.5 pr-1">
        <Svg className="size-2"><circle cx="6.5" cy="6.5" r="5" stroke="#333" strokeWidth="2" /><path d="M10 10L15 15" stroke="#333" strokeWidth="2" /></Svg>
        <input aria-label="Search" placeholder="Search" className="ml-1 w-0 flex-1 bg-transparent text-[7px] outline-none placeholder:text-[#666]" />
        <svg viewBox="0 0 22 12" className="h-3 w-[22px]" fill="none" aria-hidden="true">
          <path d="M2 6Q4 3 5.5 6T2 7M7 9V5Q10 3 10.5 5.5T7.5 7M12 4Q14.5 3 14 5.5T12.5 7M16 6Q18 1 20 4T17 7M18 2L20 1" stroke="#c23a4b" strokeWidth="1.4" />
          <path d="M10 10Q14 7.5 19 9.5M12 11L18 11" stroke="#3d9459" strokeWidth="1.2" />
        </svg>
      </label>
      <div className="ml-px flex self-stretch">
        {apps.map((a) => (
          <button
            key={a.name}
            type="button"
            aria-label={a.name}
            className={a.active ? "relative flex w-[22px] items-center justify-center bg-white/5" : "relative flex w-[22px] items-center justify-center"}
          >
            <Svg className="size-3">{a.art}</Svg>
            {a.running && (
              <span className={a.active ? "absolute bottom-px h-px w-2 bg-[#8cc4ea]" : "absolute bottom-px h-px w-[3px] bg-[#bbb]"} />
            )}
          </button>
        ))}
      </div>
      <div className="ml-auto flex h-full items-center bg-linear-to-r from-transparent via-[#211349] via-30% to-transparent pl-8">
        <button type="button" className="flex w-[75px] items-center gap-1 text-left">
          <Svg className="h-3 w-[14px]"><path d="M3 14Q-1 13 1 9.5Q2 7.5 4.5 8Q6 3.5 10 6Q12 8 11.5 9Q16 9 15 12.5Q14.5 14 13 14Z" fill="#c9dcf5" /><circle cx="11" cy="4" r="3.8" fill="#d13a3f" /></Svg>
          <span>4°C<br /><span className="text-[#c9c3cf]">Cloudy</span></span>
        </button>
        <button type="button" aria-label="Hidden icons" className="flex w-4 justify-center"><Svg className="size-[7px]"><path d="M2 11L8 5L14 11" stroke="#fff" strokeWidth="2" /></Svg></button>
        <span className="flex w-4 justify-center"><Svg className="size-[9px]"><path d="M3 13Q-1 12 1 8.5Q2 7 4 7Q6 2 10 5Q12 6 12 8Q16 8 15.5 11Q15 13 13 13Z" fill="#fff" /></Svg></span>
        <span className="flex w-4 justify-center"><Svg className="size-2"><path d="M1 2H7V8H1ZM9 3H15V6H9ZM10 8H14V14H10ZM3 10H7V13H3Z" fill="#dd3b63" /></Svg></span>
        <span className="flex w-[14px] justify-center"><Svg className="size-[9px]"><path d="M1 6Q8 0 15 6M3.5 9Q8 5 12.5 9M6 11.5Q8 10 10 11.5" stroke="#ddd" strokeWidth="1.7" /><circle cx="8" cy="13.5" r="1.2" fill="#fff" /></Svg></span>
        <span className="flex w-3 justify-center"><Svg className="size-2"><path d="M1 6H4L8 2V14L4 10H1ZM10.5 5Q12.5 8 10.5 11M12.5 3Q16 8 12.5 13" stroke="#eee" strokeWidth="1.5" /></Svg></span>
        <span className="flex w-3 justify-center"><Svg className="size-[9px]"><path d="M1 5H13V12H1Z" fill="#eee" /><path d="M13.5 7H15.5V10H13.5ZM2 2H6V5H2Z" fill="#eee" /></Svg></span>
        <time className="w-[39px] text-right">13:10<br />10/02/2025</time>
        <button type="button" aria-label="Notifications" className="ml-1"><Svg className="size-[9px]"><path d="M2 3H14V11H10L6 15V11H2Z" fill="#eee" /><path d="M4.5 6H11.5M4.5 8.5H9" stroke="#55485c" /></Svg></button>
      </div>
    </div>
  );
}

export default function App() {
  return (
    <div className="relative flex h-screen flex-col overflow-hidden font-[Roboto,'Open_Sans',sans-serif]">
      <TitleBar />
      <Ribbon />
      <DocumentArea />
      <StatusBar />
      <Taskbar />
      <div role="tooltip" className="absolute left-[157px] top-[97px] z-20 rounded-xs border border-[#c2c2c2] bg-white px-px text-[6px] leading-[9px] text-[#666] shadow-sm">
        Line
      </div>
      <svg viewBox="0 0 100 92" className="absolute left-[53px] top-[91px] z-20 h-[92px] w-[100px]" aria-hidden="true">
        <defs>
          <linearGradient id="arrow" x1="0" y1="1" x2="1" y2="0">
            <stop offset="0" stopColor="#93679f" />
            <stop offset=".5" stopColor="#8a3fae" />
            <stop offset="1" stopColor="#9a35d6" />
          </linearGradient>
        </defs>
        <path d="M2 89.5L81.5 14.5L78.5 8.5L98 1.5L90.5 23.5L85.5 18.5L3.5 90.5Z" fill="url(#arrow)" />
      </svg>
    </div>
  );
}
